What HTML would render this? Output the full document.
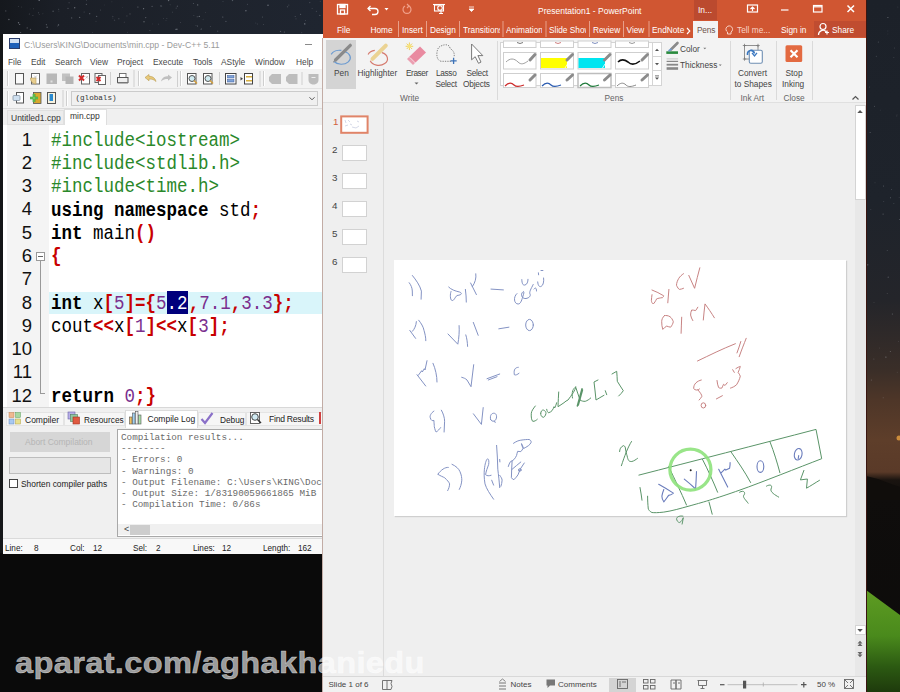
<!DOCTYPE html>
<html><head><meta charset="utf-8">
<style>
*{margin:0;padding:0;box-sizing:border-box}
html,body{width:900px;height:692px;overflow:hidden;background:#0a0a0a;font-family:"Liberation Sans",sans-serif}
.a{position:absolute}
.t{position:absolute;white-space:pre;line-height:1}
#bg{left:0;top:0;width:900px;height:692px;background:#0a0a0a}
#bgtop{left:0;top:0;width:323px;height:34px;background:linear-gradient(90deg,#15181d 0,#1b1f27 60px,#1e232c 200px,#1f2530 323px)}
#bgleft{left:0;top:34px;width:3px;height:519px;background:#141618}
#bgr{left:866px;top:0;width:34px;height:692px;background:linear-gradient(180deg,#1c2129 0,#1e232b 200px,#24252a 300px,#3a2e28 370px,#4e3628 400px,#5e3e2a 440px,#5a3a28 472px,#1a1410 480px,#0f0d0c 495px,#0c0b0a 692px)}
#dev{left:3px;top:34px;width:320px;height:520px;background:#fff;overflow:hidden}
#ppt{left:323px;top:0;width:543px;height:692px;background:#efefef;overflow:hidden}
.menu .t{font-size:8.4px;color:#484848;top:24px}
.code{font-family:"Liberation Mono",monospace;font-size:17.5px;position:absolute;white-space:pre;line-height:21px;left:48px;transform:scaleY(1.11);transform-origin:0 0}
.g{color:#2a882a}.k{font-weight:bold;color:#000}.r{color:#c80000;font-weight:bold}.n{color:#7a2f8e}
.ln{font-family:"Liberation Sans",sans-serif;font-size:18.5px;position:absolute;color:#111;text-align:right;width:30px;line-height:23.3px}
.log{font-family:"Liberation Mono",monospace;font-size:9.3px;color:#6a6a6a;line-height:11.2px;position:absolute;white-space:pre}
.st{font-size:8.2px;color:#222;top:543px}
.tab .t{font-size:8.5px;color:#222}
.rb{font-size:8.3px;color:#444}
.ptab{font-size:8.3px;color:#fff;top:26px}
.sb{font-size:8px;color:#444;top:681px}
</style></head><body>
<div id="bg" class="a"></div>
<div id="bgtop" class="a"></div>
<div id="bgleft" class="a"></div>
<div id="bgr" class="a"></div>
<svg class="a" style="left:866px;top:0" width="34" height="692">
  <path d="M0 476 L12 479 L25 484 L34 487 L34 500 L0 500z" fill="#100d0b"/>
  <defs><linearGradient id="gr" x1="0" y1="0" x2="0" y2="1"><stop offset="0" stop-color="#5e9c22"/><stop offset=".45" stop-color="#4a8a1c"/><stop offset=".75" stop-color="#2c5a12"/><stop offset="1" stop-color="#1e3a0c"/></linearGradient></defs>
  <path d="M0 590 L34 615 L34 692 L0 692z" fill="url(#gr)"/>
  <circle cx="33" cy="438" r="2.5" fill="#e8a040" opacity=".8"/>
  <g fill="#c8ccd6"><circle cx="27.8" cy="57.5" r="0.6" opacity="0.16"/><circle cx="0.8" cy="121.7" r="0.4" opacity="0.18"/><circle cx="32.6" cy="341.3" r="0.4" opacity="0.35"/><circle cx="24.3" cy="351.6" r="0.5" opacity="0.38"/><circle cx="24.5" cy="197.7" r="0.5" opacity="0.37"/><circle cx="21.9" cy="17.5" r="0.6" opacity="0.42"/><circle cx="21.3" cy="293.5" r="0.6" opacity="0.19"/><circle cx="17.8" cy="201.7" r="0.4" opacity="0.40"/><circle cx="19.9" cy="357.1" r="0.6" opacity="0.44"/><circle cx="21.9" cy="34.0" r="0.4" opacity="0.19"/><circle cx="12.3" cy="42.0" r="0.5" opacity="0.32"/><circle cx="21.3" cy="250.5" r="0.6" opacity="0.22"/><circle cx="9.0" cy="182.8" r="0.4" opacity="0.37"/><circle cx="17.1" cy="214.1" r="0.6" opacity="0.31"/><circle cx="25.4" cy="189.5" r="0.4" opacity="0.40"/><circle cx="8.0" cy="302.6" r="0.4" opacity="0.37"/><circle cx="33.2" cy="197.6" r="0.5" opacity="0.17"/><circle cx="31.0" cy="114.9" r="0.4" opacity="0.34"/><circle cx="21.9" cy="31.0" r="0.4" opacity="0.25"/><circle cx="22.2" cy="277.2" r="0.6" opacity="0.32"/><circle cx="0.4" cy="24.3" r="0.5" opacity="0.44"/><circle cx="3.4" cy="87.1" r="0.5" opacity="0.24"/><circle cx="17.6" cy="185.9" r="0.5" opacity="0.38"/><circle cx="33.8" cy="219.6" r="0.5" opacity="0.44"/><circle cx="31.8" cy="7.0" r="0.5" opacity="0.17"/><circle cx="17.2" cy="397.8" r="0.5" opacity="0.27"/><circle cx="31.2" cy="372.2" r="0.4" opacity="0.32"/><circle cx="4.8" cy="209.6" r="0.5" opacity="0.19"/><circle cx="27.9" cy="203.5" r="0.4" opacity="0.36"/><circle cx="7.9" cy="359.1" r="0.5" opacity="0.27"/><circle cx="5.4" cy="380.0" r="0.6" opacity="0.29"/><circle cx="10.3" cy="56.3" r="0.5" opacity="0.26"/><circle cx="4.1" cy="132.5" r="0.5" opacity="0.38"/><circle cx="28.5" cy="48.0" r="0.4" opacity="0.36"/><circle cx="30.7" cy="115.9" r="0.5" opacity="0.17"/><circle cx="13.3" cy="348.0" r="0.4" opacity="0.26"/><circle cx="14.6" cy="110.1" r="0.4" opacity="0.23"/><circle cx="1.8" cy="264.8" r="0.6" opacity="0.43"/><circle cx="8.5" cy="106.3" r="0.6" opacity="0.24"/><circle cx="26.3" cy="314.1" r="0.5" opacity="0.42"/></g>
</svg>
<svg class="a" style="left:0;top:0" width="323" height="34"><g fill="#c8ccd6"><circle cx="104.3" cy="5.0" r="0.4" opacity="0.18"/><circle cx="172.6" cy="12.1" r="0.4" opacity="0.47"/><circle cx="69.1" cy="2.8" r="0.7" opacity="0.17"/><circle cx="29.2" cy="14.0" r="0.4" opacity="0.48"/><circle cx="203.1" cy="19.2" r="0.4" opacity="0.35"/><circle cx="127.7" cy="32.2" r="0.4" opacity="0.34"/><circle cx="42.9" cy="13.8" r="0.4" opacity="0.35"/><circle cx="180.4" cy="22.5" r="0.4" opacity="0.35"/><circle cx="205.7" cy="12.3" r="0.4" opacity="0.35"/><circle cx="199.3" cy="16.4" r="0.7" opacity="0.42"/><circle cx="149.9" cy="30.5" r="0.6" opacity="0.25"/><circle cx="255.8" cy="23.1" r="0.5" opacity="0.18"/><circle cx="96.7" cy="16.3" r="0.6" opacity="0.41"/><circle cx="92.7" cy="32.3" r="0.4" opacity="0.33"/><circle cx="53.1" cy="11.3" r="0.7" opacity="0.30"/><circle cx="309.8" cy="2.6" r="0.6" opacity="0.27"/><circle cx="112.8" cy="16.4" r="0.7" opacity="0.17"/><circle cx="30.1" cy="8.9" r="0.4" opacity="0.17"/><circle cx="225.9" cy="21.4" r="0.7" opacity="0.25"/><circle cx="124.2" cy="22.1" r="0.4" opacity="0.48"/><circle cx="114.5" cy="20.2" r="0.7" opacity="0.17"/><circle cx="247.4" cy="4.3" r="0.5" opacity="0.29"/><circle cx="295.2" cy="16.4" r="0.5" opacity="0.31"/><circle cx="176.9" cy="29.2" r="0.7" opacity="0.45"/><circle cx="89.7" cy="13.7" r="0.6" opacity="0.39"/><circle cx="122.5" cy="7.6" r="0.4" opacity="0.21"/><circle cx="74.7" cy="7.7" r="0.7" opacity="0.44"/><circle cx="58.7" cy="9.3" r="0.5" opacity="0.30"/><circle cx="118.9" cy="18.7" r="0.5" opacity="0.39"/><circle cx="166.0" cy="20.4" r="0.4" opacity="0.31"/><circle cx="280.5" cy="31.4" r="0.7" opacity="0.29"/><circle cx="126.9" cy="15.9" r="0.7" opacity="0.17"/><circle cx="21.7" cy="6.9" r="0.5" opacity="0.19"/><circle cx="193.4" cy="3.4" r="0.5" opacity="0.34"/><circle cx="305.6" cy="20.3" r="0.4" opacity="0.46"/><circle cx="197.7" cy="4.9" r="0.6" opacity="0.48"/><circle cx="193.9" cy="15.6" r="0.4" opacity="0.45"/><circle cx="319.8" cy="15.4" r="0.7" opacity="0.26"/><circle cx="46.4" cy="24.7" r="0.6" opacity="0.32"/><circle cx="222.8" cy="17.0" r="0.5" opacity="0.48"/><circle cx="170.1" cy="4.8" r="0.4" opacity="0.42"/><circle cx="96.0" cy="21.2" r="0.4" opacity="0.39"/><circle cx="84.1" cy="12.1" r="0.5" opacity="0.27"/><circle cx="71.7" cy="17.9" r="0.6" opacity="0.37"/><circle cx="197.5" cy="26.0" r="0.5" opacity="0.43"/><circle cx="263.5" cy="24.4" r="0.5" opacity="0.22"/><circle cx="158.7" cy="24.1" r="0.4" opacity="0.43"/><circle cx="152.1" cy="6.4" r="0.6" opacity="0.31"/><circle cx="301.7" cy="32.6" r="0.6" opacity="0.18"/><circle cx="32.9" cy="15.5" r="0.6" opacity="0.22"/><circle cx="200.9" cy="29.7" r="0.4" opacity="0.32"/><circle cx="210.3" cy="26.4" r="0.4" opacity="0.44"/><circle cx="38.6" cy="12.8" r="0.5" opacity="0.32"/><circle cx="57.5" cy="26.0" r="0.6" opacity="0.18"/><circle cx="304.7" cy="23.8" r="0.7" opacity="0.29"/><circle cx="304.9" cy="23.9" r="0.5" opacity="0.50"/><circle cx="8.9" cy="19.5" r="0.7" opacity="0.43"/><circle cx="47.1" cy="27.3" r="0.7" opacity="0.38"/><circle cx="112.8" cy="18.1" r="0.5" opacity="0.16"/><circle cx="257.4" cy="24.0" r="0.4" opacity="0.33"/><circle cx="300.6" cy="14.3" r="0.5" opacity="0.44"/><circle cx="68.0" cy="8.3" r="0.6" opacity="0.33"/><circle cx="245.9" cy="10.8" r="0.7" opacity="0.44"/><circle cx="19.6" cy="24.4" r="0.7" opacity="0.38"/><circle cx="262.4" cy="17.1" r="0.5" opacity="0.34"/><circle cx="168.6" cy="0.6" r="0.7" opacity="0.42"/><circle cx="196.0" cy="25.6" r="0.5" opacity="0.21"/><circle cx="152.5" cy="23.9" r="0.4" opacity="0.26"/><circle cx="166.9" cy="18.3" r="0.4" opacity="0.46"/><circle cx="18.3" cy="6.3" r="0.4" opacity="0.42"/><circle cx="163.5" cy="18.5" r="0.4" opacity="0.31"/><circle cx="197.2" cy="16.7" r="0.5" opacity="0.39"/><circle cx="145.7" cy="17.6" r="0.7" opacity="0.33"/><circle cx="79.7" cy="17.3" r="0.6" opacity="0.47"/><circle cx="287.5" cy="6.7" r="0.7" opacity="0.20"/><circle cx="39.2" cy="14.6" r="0.4" opacity="0.38"/><circle cx="137.9" cy="7.0" r="0.6" opacity="0.42"/><circle cx="288.8" cy="5.1" r="0.6" opacity="0.20"/><circle cx="284.3" cy="31.9" r="0.5" opacity="0.41"/><circle cx="30.3" cy="29.2" r="0.5" opacity="0.50"/><circle cx="268.0" cy="5.3" r="0.7" opacity="0.50"/><circle cx="130.0" cy="13.9" r="0.6" opacity="0.26"/><circle cx="232.5" cy="0.6" r="0.7" opacity="0.30"/><circle cx="5.8" cy="10.9" r="0.6" opacity="0.33"/><circle cx="20.7" cy="32.5" r="0.5" opacity="0.49"/><circle cx="33.7" cy="8.8" r="0.4" opacity="0.47"/><circle cx="58.5" cy="24.9" r="0.7" opacity="0.45"/><circle cx="217.7" cy="31.2" r="0.7" opacity="0.20"/><circle cx="296.0" cy="18.8" r="0.6" opacity="0.18"/><circle cx="18.5" cy="22.7" r="0.7" opacity="0.46"/><circle cx="86.6" cy="0.6" r="0.4" opacity="0.43"/><circle cx="27.0" cy="28.3" r="0.4" opacity="0.24"/><circle cx="39.2" cy="0.4" r="0.7" opacity="0.47"/><circle cx="86.3" cy="4.3" r="0.5" opacity="0.48"/><circle cx="312.1" cy="8.6" r="0.5" opacity="0.22"/><circle cx="100.5" cy="10.1" r="0.5" opacity="0.25"/><circle cx="161.0" cy="5.9" r="0.6" opacity="0.43"/><circle cx="320.2" cy="1.2" r="0.4" opacity="0.41"/><circle cx="177.4" cy="6.3" r="0.7" opacity="0.24"/><circle cx="144.0" cy="21.7" r="0.7" opacity="0.38"/><circle cx="175.8" cy="29.3" r="0.6" opacity="0.39"/><circle cx="316.3" cy="11.3" r="0.5" opacity="0.29"/><circle cx="111.9" cy="1.8" r="0.5" opacity="0.15"/><circle cx="201.4" cy="29.0" r="0.7" opacity="0.21"/><circle cx="27.2" cy="27.8" r="0.6" opacity="0.36"/><circle cx="223.0" cy="1.5" r="0.5" opacity="0.21"/><circle cx="143.6" cy="8.7" r="0.6" opacity="0.49"/><circle cx="176.2" cy="8.1" r="0.6" opacity="0.23"/><circle cx="58.9" cy="11.1" r="0.4" opacity="0.32"/><circle cx="161.9" cy="6.6" r="0.4" opacity="0.18"/></g></svg>

<!-- DEV C++ -->
<div id="dev" class="a">
  <!-- title -->
  <div class="a" style="left:6px;top:4px;width:11px;height:11px;background:#1d5fb8;border:1px solid #2a3c6a"></div>
  <div class="a" style="left:7px;top:5px;width:9px;height:4px;background:#fff;opacity:.8"></div>
  <div class="t" style="left:21px;top:7px;font-size:8.6px;color:#9a9a9a">C:\Users\KING\Documents\min.cpp - Dev-C++ 5.11</div>
  <!-- menu -->
  <div class="menu">
    <div class="t" style="left:5px">File</div>
    <div class="t" style="left:28px">Edit</div>
    <div class="t" style="left:52px">Search</div>
    <div class="t" style="left:87px">View</div>
    <div class="t" style="left:114px">Project</div>
    <div class="t" style="left:150px">Execute</div>
    <div class="t" style="left:190px">Tools</div>
    <div class="t" style="left:218px">AStyle</div>
    <div class="t" style="left:252px">Window</div>
    <div class="t" style="left:293px">Help</div>
  </div>
  <!-- toolbars -->
  <div class="a" style="left:0;top:35px;width:320px;height:39px;background:#f3f3f3"></div>
  <div class="a" style="left:0;top:54px;width:320px;height:1px;background:#e2e2e2"></div>
  <div class="a" style="left:0;top:74px;width:320px;height:1px;background:#dcdcdc"></div>
  <!-- tabs -->
  <div class="a" style="left:0;top:75px;width:320px;height:16px;background:#f0f0f0"></div>
  <div class="a" style="left:4px;top:76px;width:57px;height:15px;background:#ececec;border:1px solid #e0e0e0"></div>
  <div class="t" style="left:8px;top:80px;font-size:8.5px;color:#333">Untitled1.cpp</div>
  <div class="a" style="left:61px;top:75px;width:43px;height:16px;background:#fff;border:1px solid #dedede;border-bottom:none"></div>
  <div class="t" style="left:67px;top:78px;font-size:8.5px;color:#333">min.cpp</div>
  <!-- editor -->
  <div class="a" style="left:0;top:91px;width:320px;height:283px;background:#fff"></div>
  <div class="a" style="left:4px;top:91px;width:42px;height:283px;background:#f4f4f4"></div>
  <div class="a" style="left:46px;top:257.5px;width:273px;height:22.5px;background:#d9f5fa"></div>
  <div class="a" style="left:163.5px;top:257px;width:21px;height:23px;background:#00007c"></div>
  <div class="ln" style="left:-1px;top:93.5px">1<br>2<br>3<br>4<br>5<br>6<br>7<br>8<br>9<br>10<br>11<br>12</div>
  <div class="code" style="top:95px"><span class="g">#include&lt;iostream&gt;</span>
<span class="g">#include&lt;stdlib.h&gt;</span>
<span class="g">#include&lt;time.h&gt;</span>
<span class="k">using namespace</span> std<span class="r">;</span>
<span class="k">int</span> main<span class="r">()</span>
<span class="r">{</span>

<span class="k">int</span> x<span class="r">[</span><span class="n">5</span><span class="r">]={</span><span class="n">5</span><span class="n" style="color:#fff">.2</span><span class="r" style="margin-left:1.2px">,</span><span class="n">7.1</span><span class="r">,</span><span class="n">3.3</span><span class="r">};</span>
cout<span class="r">&lt;&lt;</span>x<span class="r">[</span><span class="n">1</span><span class="r">]&lt;&lt;</span>x<span class="r">[</span><span class="n">3</span><span class="r">];</span>


<span class="k">return</span> <span class="n">0</span><span class="r">;}</span></div>
  <!-- fold -->
  <div class="a" style="left:33px;top:218px;width:9px;height:9px;border:1px solid #999;background:#fff"></div>
  <div class="a" style="left:35px;top:222px;width:5px;height:1px;background:#666"></div>
  <div class="a" style="left:37px;top:227px;width:1px;height:133px;background:#999"></div>
  <div class="a" style="left:37px;top:359px;width:5px;height:1px;background:#999"></div>
  <!-- bottom panel -->
  <div class="a" style="left:0;top:373px;width:320px;height:146px;background:#f0f0f0"></div>
  <div class="a" style="left:0;top:373px;width:320px;height:1px;background:#d8d8d8"></div>
  <div class="a" style="left:2.5px;top:378px;width:58px;height:14px;background:#f6f6f6;border:1px solid #e4e4e4"></div>
  <div class="a" style="left:61px;top:378px;width:61px;height:14px;background:#f6f6f6;border:1px solid #e4e4e4"></div>
  <div class="a" style="left:195px;top:378px;width:48px;height:14px;background:#f6f6f6;border:1px solid #e4e4e4"></div>
  <div class="a" style="left:243px;top:378px;width:77px;height:14px;background:#f6f6f6;border:1px solid #e4e4e4"></div>
  <div class="a" style="left:122px;top:376px;width:73px;height:18px;background:#fff;border:1px solid #dcdcdc;border-bottom:none"></div>
  <div class="t" style="left:22px;top:381.5px;font-size:8.5px;color:#222">Compiler</div>
  <div class="t" style="left:81px;top:381.5px;font-size:8.3px;color:#222">Resources</div>
  <div class="t" style="left:144.5px;top:380.5px;font-size:8.5px;color:#222">Compile Log</div>
  <div class="t" style="left:217px;top:381.5px;font-size:8.3px;color:#222">Debug</div>
  <div class="t" style="left:266px;top:381px;font-size:8.6px;color:#222;letter-spacing:-0.25px">Find Results</div>
  <div class="a" style="left:7px;top:398px;width:100px;height:20px;background:#d6d6d6"></div>
  <div class="t" style="left:22px;top:404px;font-size:8.5px;color:#b5b5b5">Abort Compilation</div>
  <div class="a" style="left:6px;top:423px;width:102px;height:17px;background:#e6e6e6;border:1px solid #bdbdbd"></div>
  <div class="a" style="left:6px;top:445px;width:9px;height:9px;background:#fff;border:1px solid #444"></div>
  <div class="t" style="left:18px;top:446px;font-size:8.4px;color:#222">Shorten compiler paths</div>
  <div class="a" style="left:114px;top:395px;width:210px;height:108px;background:#fff;border:1px solid #a8a8a8;border-right:none"></div>
  <div class="log" style="left:118px;top:398px">Compilation results...
--------
- Errors: 0
- Warnings: 0
- Output Filename: C:\Users\KING\Documents\min.exe
- Output Size: 1/83190059661865 MiB
- Compilation Time: 0/86s</div>
  <div class="a" style="left:115px;top:490px;width:205px;height:11px;background:#f0f0f0"></div>
  <div class="t" style="left:121px;top:491px;font-size:9px;color:#444">&lt;</div>
  <div class="a" style="left:127px;top:491px;width:20px;height:10px;background:#cdcdcd"></div>
  <!-- status -->
  <div class="a" style="left:0;top:504px;width:320px;height:16px;background:#f8f8f8;border-top:1px solid #dadada"></div>
  <div class="t st" style="left:2px;top:511px">Line:</div>
  <div class="t st" style="left:31px;top:511px">8</div>
  <div class="t st" style="left:67px;top:511px">Col:</div>
  <div class="t st" style="left:90px;top:511px">12</div>
  <div class="t st" style="left:130px;top:511px">Sel:</div>
  <div class="t st" style="left:153px;top:511px">2</div>
  <div class="t st" style="left:190px;top:511px">Lines:</div>
  <div class="t st" style="left:219px;top:511px">12</div>
  <div class="t st" style="left:260px;top:511px">Length:</div>
  <div class="t st" style="left:295px;top:511px">162</div>
</div>

<svg class="a" style="left:0;top:0" width="323" height="692">
  <!-- toolbar separators -->
  <g fill="#cfcfcf">
    <rect x="7" y="71" width="1" height="15"/><rect x="110" y="72" width="1" height="13"/><rect x="138" y="71" width="1" height="15"/>
    <rect x="177" y="71" width="1" height="16"/><rect x="180" y="71" width="1" height="15"/><rect x="219" y="72" width="1" height="13"/>
    <rect x="259.5" y="71" width="1" height="16"/><rect x="263" y="71" width="1" height="15"/><rect x="301.5" y="72" width="1" height="13"/>
    <rect x="133.5" y="70" width="1" height="17"/>
    <rect x="7" y="91" width="1" height="15"/><rect x="62.5" y="90" width="1" height="17"/><rect x="66" y="91" width="1" height="15"/>
  </g>
  <g fill="#fff"><rect x="8" y="71" width="1" height="15"/><rect x="139" y="71" width="1" height="15"/><rect x="181" y="71" width="1" height="15"/><rect x="264" y="71" width="1" height="15"/><rect x="8" y="91" width="1" height="15"/><rect x="67" y="91" width="1" height="15"/></g>
  <!-- new -->
  <rect x="15.5" y="73.5" width="8" height="10.5" fill="#fafafa" stroke="#555" stroke-width="1"/>
  <!-- open -->
  <rect x="31.5" y="73.5" width="8" height="10.5" fill="#fff" stroke="#666" stroke-width="1"/>
  <path d="M30.5 78 A5.5 5.5 0 0 0 36 84 L36 78z" fill="#e9cf90" stroke="#b59a5a" stroke-width=".6"/>
  <path d="M34 75.5 l3 3 M37 75.5 l-3 3" stroke="#aaa" stroke-width=".6"/>
  <!-- save (gray) -->
  <rect x="46.5" y="73.5" width="10.5" height="10.5" fill="#b8b8b8"/>
  <rect x="50.5" y="80.5" width="2" height="2" fill="#e0e0e0"/>
  <!-- save all (gray) -->
  <rect x="62" y="73.5" width="8" height="7.5" fill="#c2c2c2"/><rect x="65.5" y="76.5" width="8" height="7.5" fill="#b5b5b5"/>
  <!-- close (red x) -->
  <rect x="81.5" y="73.5" width="8" height="10.5" fill="#fff" stroke="#666" stroke-width="1"/>
  <path d="M79 75.5 l5 5 M84 75.5 l-5 5" stroke="#d42a2a" stroke-width="2"/>
  <path d="M85.5 76 l2.5 2.5 M88 76 l-2.5 2.5" stroke="#aaa" stroke-width=".6"/>
  <!-- close all -->
  <rect x="95" y="73.5" width="7" height="9" fill="#fff" stroke="#666" stroke-width="1"/>
  <rect x="98.5" y="75.5" width="7" height="9" fill="#fff" stroke="#666" stroke-width="1"/>
  <path d="M96.5 77 l4 4 M100.5 77 l-4 4" stroke="#d42a2a" stroke-width="1.8"/>
  <!-- print -->
  <rect x="119.5" y="73.5" width="6.5" height="4" fill="#fff" stroke="#666" stroke-width=".9"/>
  <rect x="117.5" y="77.5" width="10.5" height="5" fill="#eee" stroke="#555" stroke-width="1"/>
  <rect x="117.5" y="82" width="10.5" height="1.5" fill="#777"/>
  <!-- undo -->
  <path d="M145 77.5 L149 74.5 L149 76.3 C152 76.3 155 77.5 156 81.5 C154 79.5 152 79 149 79 L149 80.8 Z" fill="#e8c97a" stroke="#b89a50" stroke-width=".6"/>
  <!-- redo gray -->
  <path d="M172 77.5 L168 74.5 L168 76.3 C165 76.3 162 77.5 161 81.5 C163 79.5 165 79 168 79 L168 80.8 Z" fill="#c0c0c0"/>
  <!-- find -->
  <rect x="187.5" y="73.5" width="8.5" height="10.5" fill="#fff" stroke="#555" stroke-width="1"/>
  <circle cx="192" cy="78.5" r="3" fill="#cfe9ef" stroke="#444" stroke-width=".9"/>
  <path d="M194 80.5 l3 3" stroke="#d2a040" stroke-width="1.6"/>
  <rect x="203.5" y="73.5" width="8.5" height="10.5" fill="#fff" stroke="#555" stroke-width="1"/>
  <circle cx="208" cy="78.5" r="3" fill="#cfe9ef" stroke="#444" stroke-width=".9"/>
  <path d="M210 80.5 l3 3" stroke="#d2a040" stroke-width="1.6"/>
  <!-- bars -->
  <rect x="225.5" y="73.5" width="10.5" height="10.5" fill="#fff" stroke="#444" stroke-width="1"/>
  <rect x="227.5" y="75.5" width="6.5" height="2.5" fill="#7fa3d8" stroke="#3a5a9a" stroke-width=".5"/><rect x="227.5" y="79.5" width="6.5" height="2.5" fill="#7fa3d8" stroke="#3a5a9a" stroke-width=".5"/>
  <rect x="244.5" y="73.5" width="8" height="10.5" fill="#fff" stroke="#444" stroke-width="1"/>
  <rect x="246" y="76" width="6" height="1.5" fill="#d8b040"/><rect x="246" y="80" width="6" height="1.5" fill="#d8b040"/>
  <path d="M240.5 77 l2.5 1.8 -2.5 1.8z" fill="#444"/>
  <!-- gray icons -->
  <path d="M272 74 h9 v10 h-9 l-3 -3 v-4z" fill="#bdbdbd"/>
  <path d="M289 74 h8.5 v10 h-8.5 l-3 -3 v-4z" fill="#bdbdbd"/>
  <path d="M308.5 74 h10 v6 c0 3 -2.5 4.5 -5 4.5 c-2.5 0 -5 -1.5 -5 -4.5z" fill="#bdbdbd"/>
  <rect x="311.5" y="77" width="4" height="1" fill="#eee"/>
  <!-- toolbar 2 -->
  <rect x="16.5" y="92.5" width="7" height="10.5" fill="#fff" stroke="#555" stroke-width="1"/>
  <rect x="13" y="95.5" width="7" height="5" rx="1" fill="#cfe0f0" stroke="#7a8a9a" stroke-width=".7"/>
  <rect x="33.5" y="92.5" width="7.5" height="11" fill="#d8a830" stroke="#555" stroke-width=".8"/>
  <path d="M30 98 h8 M34 94 v8" stroke="#2aa02a" stroke-width="2.6"/>
  <path d="M30 98 h8 M34 94 v8" stroke="#9ae08a" stroke-width=".8"/>
  <rect x="47.5" y="92.5" width="8" height="11" fill="#f8f3e0" stroke="#555" stroke-width="1"/>
  <rect x="49.5" y="94" width="3.5" height="7" fill="#2a8ad0"/>
  <!-- combobox -->
  <rect x="71.5" y="91.5" width="246" height="14" fill="#f0f0f0" stroke="#cbcbcb" stroke-width="1"/>
  <path d="M309.5 97.3 l2.5 2.5 2.5 -2.5" fill="none" stroke="#555" stroke-width="1"/>
  <!-- bottom tab icons -->
  <g><rect x="9" y="412.5" width="5" height="5" fill="#f0b890" stroke="#c08050" stroke-width=".5"/><rect x="15.5" y="412.5" width="5" height="5" fill="#a8d8a0" stroke="#60a060" stroke-width=".5"/><rect x="9" y="419" width="5" height="5" fill="#a8c8f0" stroke="#6088c0" stroke-width=".5"/><rect x="15.5" y="419" width="5" height="5" fill="#e8e090" stroke="#b0a040" stroke-width=".5"/></g>
  <rect x="68" y="412" width="7" height="7" fill="#b8b0e8" stroke="#6a60a8" stroke-width=".6"/><rect x="70.5" y="414.5" width="7" height="7" fill="#90c8a0" stroke="#508060" stroke-width=".6"/><rect x="73" y="417" width="6.5" height="7" fill="#e05a40" stroke="#a03020" stroke-width=".6"/>
  <rect x="129.5" y="417" width="2.5" height="7" fill="#f0c060" stroke="#555" stroke-width=".6"/><rect x="132.5" y="413" width="2.5" height="11" fill="#a0d0f0" stroke="#555" stroke-width=".6"/><rect x="135.5" y="411.5" width="2.5" height="12.5" fill="#f0f0f0" stroke="#555" stroke-width=".6"/><rect x="138.5" y="415" width="2.5" height="9" fill="#a8e0a8" stroke="#555" stroke-width=".6"/>
  <path d="M201.5 419 l3.5 4 l7.5 -10" fill="none" stroke="#8a70c8" stroke-width="2.2"/>
  <rect x="250.5" y="412.5" width="9" height="11" fill="#fff" stroke="#555" stroke-width=".9"/>
  <circle cx="255" cy="417" r="3.3" fill="#d0eaf2" stroke="#333" stroke-width=".9"/><path d="M257.5 419.5 l3.5 3.5" stroke="#333" stroke-width="1.5"/>
  <path d="M320 412 v12" stroke="#d04040" stroke-width="2"/>
</svg>

<div class="t" style="left:75.5px;top:95px;font-family:'Liberation Mono',monospace;font-size:7.6px;color:#333">(globals)</div>
<div class="a" style="left:305px;top:44px;width:6.5px;height:1px;background:#8a8a8a"></div>
<!-- POWERPOINT -->
<div id="ppt" class="a">
  <!-- title bar -->
  <div class="a" style="left:0;top:0;width:543px;height:38px;background:#d05632"></div>
  <div class="a" style="left:371px;top:0;width:23px;height:20px;background:#bb4a2f"></div>
  <svg class="a" style="left:0;top:0" width="543" height="21">
    <g fill="none" stroke="#fff" stroke-width="1.3">
      <rect x="14.5" y="4.5" width="10" height="9.5"/>
      <rect x="17" y="4.5" width="5" height="3" fill="#fff"/>
      <rect x="17.5" y="10" width="4" height="4"/>
      <path d="M45 8.5 h7 a3 3 0 0 1 0 6 h-3" />
      <path d="M47.5 6 l-2.5 2.5 2.5 2.5"/>
    </g>
    <path d="M61.5 8 h4 l-2 2.5z" fill="#fff"/>
    <g fill="none" stroke="#f0a08a" stroke-width="1.2"><path d="M82 6 a4 4 0 1 0 4 0"/><path d="M84 4 l2 2 -2 2"/></g>
    <g fill="none" stroke="#fff" stroke-width="1.1">
      <path d="M110 4.5 h12"/><rect x="111.5" y="5" width="9" height="6"/><circle cx="117" cy="8" r="2.3"/><path d="M116 13.5 h4 M118 11 v2.5"/>
    </g>
    <path d="M146 7 h5 M146 9 h5 l-2.5 2.5z" stroke="#fff" stroke-width="0.8" fill="#fff"/>
    <g fill="none" stroke="#fff" stroke-width="1.2">
      <rect x="424.5" y="5" width="10" height="7"/><path d="M429.5 11 v-4 M427.5 9 l2 -2 2 2"/>
      <path d="M458 10 h7.5"/>
      <rect x="490.5" y="5.5" width="8.5" height="6.5"/><path d="M490.5 6.8 h8.5"/>
      <path d="M524.5 5.5 l6.5 6.5 M531 5.5 l-6.5 6.5" stroke-width="1.5"/>
    </g>
  </svg>
  <div class="t" style="left:215px;top:6.8px;font-size:8.5px;color:#fff">Presentation1 - PowerPoint</div>
  <div class="t" style="left:375px;top:6px;font-size:8.5px;color:#fff">In...</div>
  <!-- tabs -->
  <div class="a" style="left:370px;top:21px;width:25px;height:17px;background:#f3f3f3"></div>
  <div class="a" style="left:491px;top:21px;width:52px;height:16px;background:#c04c30"></div>
  <div class="tabs">
    <div class="t ptab" style="left:14px">File</div>
    <div class="t ptab" style="left:47.5px">Home</div>
    <div class="t ptab" style="left:79px">Insert</div>
    <div class="t ptab" style="left:107px">Design</div>
    <div class="a" style="left:140px;top:21px;width:37px;height:16px;overflow:hidden"><div class="t ptab" style="left:0;top:5px">Transitions</div></div>
    <div class="a" style="left:183px;top:21px;width:36px;height:16px;overflow:hidden"><div class="t ptab" style="left:0;top:5px">Animations</div></div>
    <div class="a" style="left:226px;top:21px;width:37px;height:16px;overflow:hidden"><div class="t ptab" style="left:0;top:5px">Slide Show</div></div>
    <div class="t ptab" style="left:270px">Review</div>
    <div class="t ptab" style="left:303.5px">View</div>
    <div class="t ptab" style="left:329px">EndNote</div>
    <svg class="a" style="left:362.5px;top:26.5px" width="5" height="8"><path d="M1 1 L3.8 4 L1 7" fill="none" stroke="#fff" stroke-width="1.1"/></svg>
    <div class="t ptab" style="left:374px;color:#6e534b;font-size:8.3px;top:26px;letter-spacing:-0.2px">Pens</div>
    <div class="t ptab" style="left:414px;color:#f9d3c6">Tell me...</div>
    <div class="t ptab" style="left:458px">Sign in</div>
    <div class="t ptab" style="left:509px">Share</div>
  </div>
  <svg class="a" style="left:0;top:21px" width="543" height="17">
    <g fill="#e89f89"><rect x="75" y="0" width="1" height="16"/><rect x="103" y="0" width="1" height="16"/><rect x="136" y="0" width="1" height="16"/><rect x="179.5" y="0" width="1" height="16"/><rect x="222.5" y="0" width="1" height="16"/><rect x="266" y="0" width="1" height="16"/><rect x="300" y="0" width="1" height="16"/><rect x="325.5" y="0" width="1" height="16"/></g>
    <g fill="none" stroke="#f9d3c6" stroke-width="1"><path d="M404.5 11 a3.3 3.3 0 1 1 3.5 0 v2 h-3.5z"/></g>
    <g fill="none" stroke="#fff" stroke-width="1.2"><circle cx="500" cy="5.5" r="3"/><path d="M495.5 14 a4.5 4.5 0 0 1 8 -3"/><path d="M502 11.5 h4 M504 9.5 v4"/></g>
  </svg>
  <!-- ribbon -->
  <div class="a" style="left:0;top:38px;width:543px;height:65px;background:#f3f3f3;border-bottom:1px solid #e0e0e0"></div>
  <div class="a" style="left:3px;top:40px;width:30px;height:49px;background:#d4d4d4"></div>
  <div class="t rb" style="left:11px;top:68.8px">Pen</div>
  <div class="t rb" style="left:34.5px;top:68.8px">Highlighter</div>
  <div class="t rb" style="left:83px;top:68.8px;letter-spacing:-0.45px">Eraser</div>
  <div class="t rb" style="left:113px;top:68.8px;letter-spacing:-0.35px">Lasso</div>
  <div class="t rb" style="left:112.5px;top:79.8px;letter-spacing:-0.3px">Select</div>
  <div class="t rb" style="left:143.5px;top:68.8px;letter-spacing:-0.3px">Select</div>
  <div class="t rb" style="left:140px;top:79.8px;letter-spacing:-0.2px">Objects</div>
  <div class="t rb" style="left:77px;top:94px;color:#666">Write</div>
  <div class="a" style="left:173.5px;top:41px;width:1px;height:59px;background:#dadada"></div>
  <!-- pens gallery -->
  <div class="a" style="left:177px;top:42px;width:162px;height:44px;background:#fff;border:1px solid #d4d4d4"></div>
  <div class="t rb" style="left:281.5px;top:94px;color:#666">Pens</div>
  <div class="t rb" style="left:357px;top:44.7px">Color</div>
  <div class="t rb" style="left:357px;top:60.6px">Thickness</div>
  <div class="a" style="left:406.5px;top:41px;width:1px;height:59px;background:#dadada"></div>
  <div class="t rb" style="left:415px;top:68.8px">Convert</div>
  <div class="t rb" style="left:411.5px;top:79.5px">to Shapes</div>
  <div class="t rb" style="left:417.5px;top:94px;color:#666">Ink Art</div>
  <div class="a" style="left:452.5px;top:41px;width:1px;height:59px;background:#dadada"></div>
  
  <div class="t rb" style="left:462.5px;top:68.8px">Stop</div>
  <div class="t rb" style="left:459px;top:79.5px">Inking</div>
  <div class="t rb" style="left:460.5px;top:94px;color:#666">Close</div>
  <div class="a" style="left:488.5px;top:41px;width:1px;height:59px;background:#dadada"></div>
  <!-- main area -->
  <div class="a" style="left:60px;top:103px;width:1px;height:573px;background:#dcdcdc"></div>
  <div class="a" style="left:71px;top:260px;width:452px;height:256px;background:#fff;box-shadow:1px 1px 1px #cfcfcf"></div>
  <!-- scrollbar -->
  <div class="a" style="left:532px;top:105px;width:10.5px;height:571px;background:#e8e8e8"></div>
  <div class="a" style="left:532px;top:105px;width:10.5px;height:95px;background:#fff;border:1px solid #d4d4d4"></div>
  <div class="a" style="left:532px;top:625px;width:10.5px;height:10px;background:#fff;border:1px solid #d4d4d4"></div>
  <div class="t" style="left:10px;top:117.2px;font-size:9.8px;color:#d2603e">1</div>
  <div class="t" style="left:9px;top:144.6px;font-size:9.8px;color:#444">2</div>
  <div class="t" style="left:9px;top:172.6px;font-size:9.8px;color:#444">3</div>
  <div class="t" style="left:9px;top:200.6px;font-size:9.8px;color:#444">4</div>
  <div class="t" style="left:9px;top:228.6px;font-size:9.8px;color:#444">5</div>
  <div class="t" style="left:9px;top:256.6px;font-size:9.8px;color:#444">6</div>
  <!-- status bar -->
  <div class="a" style="left:0;top:676px;width:543px;height:16px;background:#f1f1f1;border-top:1px solid #d8d8d8"></div>
  <div class="a" style="left:286px;top:677.5px;width:26.5px;height:14.5px;background:#d4d4d4"></div>
  <div class="t sb" style="left:5.5px">Slide 1 of 6</div>
  <div class="t sb" style="left:187.5px">Notes</div>
  <div class="t sb" style="left:235px">Comments</div>
  <div class="t sb" style="left:494px">50 %</div>
</div>

<svg class="a" style="left:0;top:0" width="900" height="692">
  <!-- Pen -->
  <path d="M331.2 54.4 A9 6.5 0 0 1 341.4 50.4 M345 51.8 A9 6.5 0 1 1 334 61.5" fill="none" stroke="#6c9bd0" stroke-width="1.2"/>
  <path d="M350.3 45.3 L335.5 60" stroke="#8a8a8a" stroke-width="3.2" stroke-linecap="round"/>
  <path d="M335.5 60 L333 62.3" stroke="#8a8a8a" stroke-width="1"/>
  <!-- Highlighter -->
  <path d="M368.1 54.4 A8.8 6.5 0 0 1 374.8 50.3 M381.9 52.7 A8.8 6.5 0 1 1 370.3 60.7" fill="none" stroke="#d57a6e" stroke-width="1.2"/>
  <path d="M385.8 45.6 L372.5 58.8" stroke="#ebd393" stroke-width="4" stroke-linecap="round"/>
  <!-- Eraser -->
  <path d="M420 46.5 L426 52.5 L415 63 L409 57z" fill="#e98aa0"/>
  <path d="M409 57 L415 63 L413 65 L407 59z" fill="#e98aa0" opacity=".8"/>
  <path d="M410 57.5 L415.5 63" stroke="#fff" stroke-width=".6"/>
  <g stroke="#efd060" stroke-width="1"><path d="M409.4 42.5 v7.6 M405.6 46.3 h7.6 M406.7 43.6 l5.4 5.4 M412.1 43.6 l-5.4 5.4"/></g>
  <circle cx="409.4" cy="46.3" r="2" fill="#f7e27a"/>
  <path d="M414.5 82.5 h4 l-2 2z" fill="#666"/>
  <!-- Lasso -->
  <path d="M441 46 C446 43.5 450 45 450 48.5 C453 50 455 53 454 57 M451 61.3 H441 C436 60 436.5 53 437.5 50 C438 48 439 46.8 441 46" fill="none" stroke="#777" stroke-width=".9" stroke-dasharray="1.3 1.1"/>
  <path d="M453.6 57.7 v6.2 M450.5 60.8 h6.2" stroke="#3d73b8" stroke-width="1.3"/>
  <!-- Cursor -->
  <path d="M471.6 44 L471.6 59.8 L475.2 56.7 L478.5 63.3 L481 62.1 L477.9 55.6 L482.8 55.6 Z" fill="#fff" stroke="#6b6b6b" stroke-width=".9" stroke-linejoin="round"/>
  <!-- gallery -->
  <g fill="#fff" stroke="#cfcfcf" stroke-width="1">
    <rect x="503.5" y="41" width="32.5" height="6.5"/><rect x="540.5" y="41" width="33" height="6.5"/><rect x="578" y="41" width="33" height="6.5"/><rect x="615.5" y="41" width="33" height="6.5"/>
    <rect x="503.5" y="52.5" width="32.5" height="16.5"/><rect x="540.5" y="52.5" width="33" height="16.5"/><rect x="578" y="52.5" width="33" height="16.5"/><rect x="615.5" y="52.5" width="33" height="16.5"/>
    <rect x="503.5" y="73.5" width="32.5" height="14"/><rect x="540.5" y="73.5" width="33" height="14"/><rect x="578" y="73.5" width="33" height="14" stroke="#bdbdbd" stroke-width="1.5"/><rect x="615.5" y="73.5" width="33" height="14"/>
  </g>
  <g fill="none" stroke-width="1">
    <path d="M517 42.5 q3 2 6 0" stroke="#777"/><path d="M555 42.5 q3 2 6 0" stroke="#d08080"/><path d="M592 42.5 q3 2 6 0" stroke="#8090c0"/><path d="M629 42.5 q3 2 6 0" stroke="#999"/>
  </g>
  <rect x="541" y="58" width="26" height="10" fill="#ffff00"/>
  <rect x="578.5" y="58" width="26.5" height="10" fill="#00e5f0"/>
  <g fill="none">
    <path d="M506 62 C510 58 514 58 518 62 C521 65 524 64 528 61" stroke="#888" stroke-width=".8"/>
    <path d="M618 62 C621 59 624 59 628 62 C631 65 635 65 640 61" stroke="#111" stroke-width="1.6"/>
    <path d="M505 86 C508 83 511 82 514 85 C516 87 519 87 524 85" stroke="#cc2a2a" stroke-width="1.2"/>
    <path d="M542 86 C545 83 548 82 551 85 C553 87 556 87 561 85" stroke="#2a5bb0" stroke-width="1.2"/>
    <path d="M580 86 C583 83 586 82 589 85 C591 87 594 87 599 85" stroke="#1e7a3a" stroke-width="1.2"/>
    <path d="M617 86 C620 83 623 82 626 85 C628 87 631 87 636 85" stroke="#888" stroke-width="1"/>
  </g>
  <g stroke="#8b8b8b" stroke-width="3" stroke-linecap="round">
    <path d="M535 54.5 L530 60"/><path d="M572.5 54.5 L567 60"/><path d="M610 54.5 L604.5 60"/><path d="M647.5 54.5 L642 60"/>
    <path d="M535 75 L530 80"/><path d="M572.5 75 L567 80"/><path d="M610 75 L604.5 80"/><path d="M647.5 75 L642 80"/>
  </g>
  <g stroke="#fff" stroke-width=".8" fill="none"><path d="M565 68 l2.5 -4 2.5 4"/><path d="M602.5 68 l2.5 -4 2.5 4"/></g>
  <g fill="#fff" stroke="#d4d4d4" stroke-width="1"><rect x="652.5" y="42.5" width="9" height="14"/><rect x="652.5" y="56.5" width="9" height="14"/><rect x="652.5" y="70.5" width="9" height="15"/></g>
  <g fill="#555"><path d="M655 51 h4 l-2 -2.3z"/><path d="M655 63 h4 l-2 2.3z"/><path d="M655 77.5 h4 l-2 2.3z"/><rect x="655" y="75.5" width="4" height=".8"/></g>
  <!-- Color / Thickness -->
  <rect x="666.3" y="51.3" width="11.7" height="2.6" fill="#2a8a3e"/>
  <path d="M677.5 43 L671 49.5" stroke="#8a8a8a" stroke-width="2.6" stroke-linecap="round"/>
  <path d="M671.5 49 L668.5 51" stroke="#6e9ad0" stroke-width="1.6"/>
  <g fill="#888"><rect x="666.6" y="58.5" width="11.5" height=".8" fill="#bbb"/><rect x="666.6" y="60.8" width="11.5" height="1.2"/><rect x="666.6" y="63.8" width="11.5" height="1.8"/><rect x="666.6" y="67.2" width="11.5" height="2.6"/></g>
  <path d="M703.3 47.7 h3 l-1.5 1.6z M718.7 64.4 h3 l-1.5 1.6z" fill="#777"/>
  <!-- Convert -->
  <g stroke="#777" stroke-width=".8" fill="none"><path d="M744.5 45.5 h13.5 v13.5 h-13.5z"/><path d="M742.8 45.5 h3.4 M744.5 43.8 v3.4 M756.3 45.5 h3.4 M758 43.8 v3.4 M742.8 59 h3.4 M744.5 57.3 v3.4"/></g>
  <rect x="749.3" y="50.3" width="13" height="13" rx="1.5" fill="#fff" stroke="#6f8fb3" stroke-width="1.1"/>
  <path d="M747.5 55 C747 50 753 48.5 754.5 53.5" fill="none" stroke="#3b78c0" stroke-width="1.6"/>
  <path d="M752 52.8 L754.5 56 L757 52.8" fill="none" stroke="#3b78c0" stroke-width="1.3"/>
  <!-- Stop -->
  <rect x="785.5" y="45.3" width="16.7" height="16.7" rx="1.5" fill="#e36a41"/>
  <path d="M790.5 50.3 L797.5 57.2 M797.5 50.3 L790.5 57.2" stroke="#fff" stroke-width="2.2"/>
  <!-- collapse -->
  <path d="M852.5 99.5 L855.5 96.5 L858.5 99.5" fill="none" stroke="#555" stroke-width="1.2"/>
</svg>

<svg class="a" style="left:0;top:0" width="900" height="692">
  <!-- thumbnails -->
  <rect x="341.2" y="116.4" width="26.4" height="16.4" fill="#fff" stroke="#e08468" stroke-width="2"/>
  <g fill="none" stroke="#b8c0d8" stroke-width=".6"><path d="M345 120 l1 3 M348 120 l2 2 M345 126 l3 -1 M352 127 l4 1 l3 -2 M357 121 l2 1 M350 124 l2 1"/></g>
  <g fill="#fff" stroke="#d2d2d2" stroke-width="1">
    <rect x="342.5" y="145.5" width="24" height="15"/><rect x="342.5" y="173.5" width="24" height="15"/><rect x="342.5" y="201.5" width="24" height="15"/><rect x="342.5" y="229.5" width="24" height="15"/><rect x="342.5" y="257.5" width="24" height="15"/>
  </g>
  <!-- scrollbar glyphs -->
  <path d="M857.3 113 h5.5 l-2.75 -3z" fill="#555"/>
  <path d="M857.3 629 h5.5 l-2.75 3z" fill="#555"/>
  <g fill="#666"><path d="M857.5 643.5 h5 l-2.5 -2.7z M857.5 646 h5 l-2.5 -2.7z"/><path d="M857.5 652 h5 l-2.5 2.7z M857.5 654.5 h5 l-2.5 2.7z"/></g>
  <!-- status icons -->
  <g fill="none" stroke="#666" stroke-width=".9">
    <path d="M382.5 680.5 h4.5 v9 h-4.5z M387 680.5 h5 l-1 3 1 3 -1 3 h-4"/>
    <path d="M499 683 h7 M499 686 h7 M499 689 h7"/>
    <rect x="617.5" y="679.5" width="10" height="9"/><path d="M620 681 v6 M622 682 h4"/>
    <rect x="643.5" y="679.5" width="4.5" height="3.5"/><rect x="650.5" y="679.5" width="4.5" height="3.5"/><rect x="643.5" y="685.5" width="4.5" height="3.5"/><rect x="650.5" y="685.5" width="4.5" height="3.5"/>
    <path d="M671 680 h5 v9 h-5z M676 680 h5 v9 h-5z M673 683 h2 M678 683 h2"/>
    <path d="M697.5 680.5 h10 M698.5 680.5 v5 h8 v-5 M702.5 685.5 v3 M700.5 688.5 h4"/>
    <rect x="844.5" y="679.5" width="9" height="9"/><path d="M845 680 l3 3 M853 680 l-3 3 M845 688 l3 -3 M853 688 l-3 -3"/>
  </g>
  <path d="M499.5 681.5 l3 -2.5 3 2.5" fill="none" stroke="#666" stroke-width=".8"/>
  <path d="M546.5 679.5 h8.5 v6 h-5 l-2.5 2.5 v-2.5 h-1z" fill="#777"/>
  <path d="M720 684.7 h4.5" stroke="#555" stroke-width="1.2"/>
  <path d="M727.5 684.7 h70" stroke="#bdbdbd" stroke-width="1"/>
  <rect x="743" y="680.7" width="3.2" height="7.8" fill="#555"/>
  <path d="M763.3 682.5 v4" stroke="#aaa" stroke-width=".8"/>
  <path d="M801 684.7 h5.5 M803.8 682 v5.5" stroke="#555" stroke-width="1.2"/>
  <!-- INK blue -->
  <g fill="none" stroke="#7c8cc0" stroke-width="0.95" stroke-linecap="round" stroke-linejoin="round">
    <path d="M409.2 282.7 C411 285 412.2 288 412.3 291 L412.4 295.7"/>
    <path d="M412.4 275.5 C416 280 420 285.5 421.4 291.1 L421.1 299.2"/>
    <path d="M448.7 287.1 C451 289.5 455 291 459.5 292 C462.5 293 462 295 457 295.5 C455 297 454 301 452 300.5 C450 300 450 294 451 291.5"/>
    <path d="M465.4 289.4 C466 294 466.3 298 466.3 302.1"/>
    <path d="M475.8 273.8 C476.5 278 475 283 472.4 286.5 M470.6 283 L476.4 294.6"/>
    <path d="M491 289.1 L503.4 289.9"/>
    <path d="M516.9 293.6 C513 297 514 304 518.2 304 C521 304 522 299 523 296 C524.5 292 524 290 522 293 C520.5 296 523 299 526 298.5 C529 298 531 296 530 294 C529 292 531 289 533.2 284.5 M534 289 C535.5 287 536.5 288 536.5 291 M537.7 281.9 C538 286 539.5 287 541 286.5 C543.5 285.5 544 281 543.6 278"/>
    <path d="M521.8 279.6 C522 284 523 285.5 525 285 C527 284.5 528 282 528 279.3"/>
    <path d="M538.4 272.8 L538.6 274.8 M541 270.5 L542.9 270.5"/>
    <path d="M416.4 321.6 C416 326 414.5 329 412.4 331.3 M409.8 330.4 L415.6 338.4"/>
    <path d="M418.7 320.2 C421 323 423.5 327 424 330.4 C425 334 425.8 337 425.8 340.7"/>
    <path d="M448 334 L457.8 344.2 C459 338 459.5 331 459.1 325.6"/>
    <path d="M465.8 334.9 C466.8 338 467.4 342 467.6 346.4"/>
    <path d="M473.3 322.4 L478.2 335.3"/>
    <path d="M498.8 328.8 L508.9 327.2"/>
    <ellipse cx="529.5" cy="325" rx="3.8" ry="5.6"/>
    <path d="M417 374.7 L425.7 386 M418.3 375.3 L421.7 370.7 L422.3 372 L424.3 368.7 L425 370 L427 360.7"/>
    <path d="M433 363.3 C435.5 369 437 376 437 382"/>
    <path d="M461.7 377.3 C464 378 465.5 378.5 467 380 L471 386.7 L473.7 364.7"/>
    <path d="M487 378.7 L499.7 374 M488.3 380 L497 376.7"/>
    <path d="M518.3 367.3 C515.5 367.5 513.5 369 514.3 374.7 C515.5 375.5 517.5 374.5 519 373.3"/>
    <path d="M433.9 411.1 C431 413 429.5 416 430.3 417.8 C430.8 420.5 432.5 421 433.9 420.4 C434 423 434.3 425 434.3 426.7 C435 429.5 435.5 431.5 436.1 432 C438 431 439.5 429 440.6 427.6"/>
    <path d="M441.4 410.2 C443.5 414 444.6 418 444.6 421.3 L444.1 432"/>
    <path d="M473.4 413.8 L481.4 424.4 L483.2 407.6"/>
    <path d="M490.6 419.5 C489.5 415 492 412.8 494.5 413.3 C497.5 414 497 419.5 494.5 421 C492.5 421.8 491 420.5 490.6 419.5 M494.5 421 L495.2 422.5"/>
    <path d="M437.9 474.1 C441 470 445 467 448.3 467.4 M438.2 474.5 C440.5 476 443 476.8 444.7 477.8 C447 480 449 482 449.6 483.9 C449.5 486.5 448.7 488.8 447.7 490.6"/>
    <path d="M452 464.3 C456 466 459 469 460 471.7 C461.5 475 461.8 478 461.8 480.2 C461.5 484 460.5 487 459.3 489.4"/>
    <path d="M496.6 445.4 C497.2 453 497.6 461 497.8 469.2 C498.5 475 499.2 481 499.7 487.6"/>
    <path d="M493.6 499.2 C490 494 486.5 489 485 483.9 C484 478 484 473 484.4 469.2 C485 464 486 460 487.5 458.8 C489 459 489 462 488.7 464.3 C487.5 468 486 471 485.6 474.7 C487 476 489 476 491.1 475.3"/>
    <path d="M491.7 480.2 L493.6 485.1 M499.7 475.3 C501 477 502 478.5 502.1 480.2 C502 482.5 501.5 484.5 500.9 486.3 M499.7 459.4 L499.9 461.9"/>
    <path d="M513.5 443.3 C516 441.5 518.5 440.5 520.8 440.2 C524 439.7 527 439.4 529.1 439.5 C530.5 440 531.2 441 531.2 442.2 C530.5 443.8 529.5 445 528.4 445.7 C526.5 447 525 447.8 523.6 448.5 C522 446.5 521.3 444.5 521.5 443.6 C522.5 445 523 446.5 523.2 448.1 C522.5 449.5 521.7 450.8 520.8 451.6 C519.5 451.6 518.5 451.4 517.7 451.3 C517.2 452.5 516.9 454 516.6 455.4 C515.8 457 515 458.5 513.9 459.6 C512.8 460.5 511.5 461.2 510.4 461.7 C509.5 463 508.8 464.8 508.3 466.5"/><path d="M512.1 461 C511.8 466 511.5 472 511.4 477.6 C512 478.8 513 479.5 513.9 479.7 C515.5 478 517 476.5 518 474.8 C518.8 473 519.5 471 520.1 469.3 C521.5 467 523 465 524.3 463"/><path d="M512.1 469.3 C515 466.8 518 464.3 520.8 462"/><circle cx="519.8" cy="470" r="1.3"/>
  </g>
  <!-- INK green -->
  <g fill="none" stroke="#5a9468" stroke-width="1" stroke-linecap="round" stroke-linejoin="round">
    <path d="M535.3 406 C533 409 531.5 411 531.3 413.3 C531 417 531.5 420 532.7 421.3 C534.5 421.5 536 420.5 537.3 419.3"/>
    <path d="M540.7 413.3 C541 411 542 410 543.3 410 C545 410.5 546 412 546 413.3 C545.5 416 544 417.5 543.3 417.3 C541.5 417 540.5 415 540.7 413.3 M546.7 409.3 C547 411 547.5 412.5 548.7 412.7 C550 412.5 551 411.5 552 410.7 C553 409.5 553.5 408 554 406.7 L554.7 408 C555.5 406 556.3 404.5 556.7 402.7"/>
    <path d="M558.7 392 C558.5 396 558.2 401 558 406.7 C560 405.5 562 404 564 402.7 C565.5 401.5 566.5 400.5 568 400 C570 397.5 571.5 395 573.3 392.7 C574.5 390.5 575.5 388.5 576 386.7 C574.5 387.5 573.5 389 572.7 390.7 C572 393 572 396 572.5 398"/>
    <path d="M577.3 406 L582 388.7 M578.3 405 L582.5 390" stroke-width="1.4"/>
    <path d="M576 388 C577.5 392 578.5 396 580 400 C581.5 401 583.5 401.5 585.3 401.3 C587.5 400.5 589 399.5 590.7 398"/>
    <path d="M598 380 L594 382 C594.8 388 595.4 394 596 400 C598.5 398.5 601 397 604 395.3"/>
    <path d="M605.3 390.7 L606.7 394.7"/>
    <path d="M612 374 L616.7 371.3 C617 374.5 617.2 378 617.3 381.3 C619 384.5 621.5 387.5 623.3 390.7 C622 392.5 620.5 394.5 618.7 396"/>
    <path d="M638.9 475.1 C690 462 760 444 816 429.4 L821.7 458.7 C800 467 760 483 740 490 C715 499 700 503 690 505.8 C680 508.5 672 511 663.8 512.1 C658 512.8 654 512.8 651.9 512.5 C649.5 511.5 648.3 509 648.3 509 C647.8 504 647.6 500 647.6 496.2"/>
    <path d="M640 487.5 C640.8 492 641.5 496 642 500.2"/>
    <path d="M668.7 466.6 C675 480 681 492 686.5 505"/>
    <path d="M702.4 459.2 C708 470 713 481 717.6 492.2"/>
    <path d="M731 451.9 C738 462 745 472 750.6 482.5"/>
    <path d="M770.1 442.1 C774 452 777 462 779.9 472.7"/>
    <path d="M709 502 L712.2 514.2"/>
    <path d="M619.6 451.6 C619.8 449 620.5 447 623.5 445.6 C625 446 625.5 447.5 625.5 449 C626 452 626.5 454 627.1 455.8 C627.5 458 628 459.5 628.7 460.5 C629.5 461.5 630.5 461.5 631.8 461.5 C634 461 636 459.5 637.5 458.4"/>
    <path d="M631.5 441.5 C628 447 624.5 456 621.4 465.7"/>
    <path d="M739.6 492.2 C743 490 746 492 744 495 C742 497 746 500 748.1 503.2"/>
    <path d="M766.5 486.1 C770 484 773 485 771 489 C770 492 775 495 778.7 497.1"/>
    <path d="M803.9 470.4 L800.4 479.9 L807.4 479 L806.5 488.2 C810.5 486 815 483 819.5 480.3"/>
    
  </g>
  <g fill="none" stroke="#6a7cbc" stroke-width="1.1" stroke-linecap="round" stroke-linejoin="round">
    <path d="M658.7 484.3 C663.5 487 668.5 490 673.4 493.1 C672 494.5 670 495.2 668.6 495.4 C667 497.5 665.5 500 663.8 501.8 C662.5 500 661.9 498 661.9 496.2 C662.3 494 663 491.5 663.8 489.5"/>
    <path d="M684.3 479.1 C688 482 692 485.5 695.6 489 C696 483 696.3 477 696.5 471.5"/>
    <path d="M718.7 469.2 L727.7 487.1 M721.1 472.9 L724.9 469.2 L725.8 470.1 L729.6 468.2 C730 466 730.2 464 730.1 462.6"/>
    <ellipse cx="760.4" cy="466.6" rx="3.4" ry="5.8"/>
    <ellipse cx="798.2" cy="454.3" rx="3.8" ry="5.8" transform="rotate(12 798.2 454.3)"/><path d="M798.7 455.6 L798.2 458.7"/>
  </g>
  <circle cx="690.7" cy="470.2" r="1" fill="#222"/>
  <circle cx="690.4" cy="469.6" r="20.5" fill="none" stroke="#8ee27c" stroke-width="3.3" opacity=".9"/>
  <path d="M682.9 516.1 C680 515.5 677 516.5 676.6 518.5 C676.5 520.5 678 522.5 679.7 522.5 C681.5 521.5 682.5 519.5 683.3 517.7 C683 520 682.5 522 682.1 524.1" fill="none" stroke="#5a9468" stroke-width="0.95" stroke-linecap="round"/>
  <!-- INK red -->
  <g fill="none" stroke="#c47c7c" stroke-width="0.95" stroke-linecap="round" stroke-linejoin="round">
    <path d="M652 290 C656 291.5 660 293.5 663.7 295.8 C663.5 297 662.5 297.6 662.5 297.6 C660 298 658 298.3 656.7 298.8 C655.5 301 654.5 303 653.2 304 C652 303 651.5 302 651.4 300.5 C651.5 298.5 651.7 296.5 652 294.7"/>
    <path d="M668.9 289.4 C668.5 294 668.2 298 667.8 302.8"/>
    <path d="M683.5 273.7 C681.5 275 680 276.5 678.8 278.3 C677.5 280.5 676.5 283 676.5 285.3 C677.5 287.5 678.5 289 679.4 289.4 C681 289.3 682.3 288.8 683.5 288.3"/>
    <path d="M688.8 275.4 L694.6 288.3 C696.5 281 698 274 699.8 267.8"/>
    <path d="M664.4 315.6 C662.5 317.5 661.7 319.5 661.7 321.7 C661.7 324.5 662 327 662.8 329.4 C664 328 665.3 326.8 666.7 326.1 C668 326.5 669.3 327 670.6 327.2 C672 325.5 673 323.5 673.3 321.7 C672.5 319.5 671.5 317.8 670 316.7 C668 315.5 666 315.3 664.4 315.6"/>
    <path d="M681.7 317.2 C681.5 322 681.3 328 681.1 333.3"/>
    <path d="M697.8 307.2 C697 308.5 696.3 309.8 695.6 310.6 C694.3 310.3 693 310 691.7 310 C691 311.5 690.6 313 690.6 315 C691 317 691.8 319 692.8 320.6"/>
    <path d="M703.3 320 C703.8 315 704.3 309 705 303.9 C708 308 711.5 313 714.4 317.8"/>
    <path d="M697.5 361 C710 355 722 349 735.4 343.7"/>
    <path d="M737 352.9 C738.5 349 739.7 345 740.8 341.5 M739.2 356.7 C741.5 350 744 344 746.2 338.3"/>
    <path d="M701.3 380 C697 381 693.5 384 693.7 388.6 C695 390.5 698 390.5 699.5 389 M698 390 C700.5 393 702 395 701.8 396.5 C701 398 700 399 699.1 400"/>
    <ellipse cx="703.4" cy="405.4" rx="2.3" ry="2.6"/>
    <path d="M717 380.5 C717.2 383 717.8 385.5 718.6 387.5 C719.5 388.2 720.5 388.3 721.8 388.1 C722.5 386.8 723 385.5 723.5 384.3 C724 384.8 724.5 385.2 725.1 385.4 C726 384.5 726.8 383.5 727.3 382.7"/>
    <path d="M735.9 368.6 C737.5 367.5 739 366.8 740.3 366.4 C739.8 368.5 739 370.5 738.1 372.4 C739 373.5 739.8 374.8 740.3 376.2 C739.5 379.5 738 382.5 736.5 384.8 C734.5 386.5 732.5 387.5 730.5 388.1"/>
    <path d="M732.7 369.7 L734.3 372.4"/>
    <path d="M716.4 398.9 L722.4 395.7"/>
  </g>
</svg>

<div class="a" style="left:322.3px;top:38px;width:1.2px;height:654px;background:#c2aca5"></div>
<div class="a" style="left:865.5px;top:0;width:1.2px;height:692px;background:#3a1510"></div>
<!-- watermark -->
<div class="t" style="left:14.5px;top:647.5px;font-size:29.5px;font-weight:bold;color:rgba(255,255,255,.6);letter-spacing:0.3px;transform:scaleX(1.105);transform-origin:0 0;-webkit-text-stroke:0.5px rgba(255,255,255,.6)">aparat.com/aghakhaniedu</div>
</body></html>
